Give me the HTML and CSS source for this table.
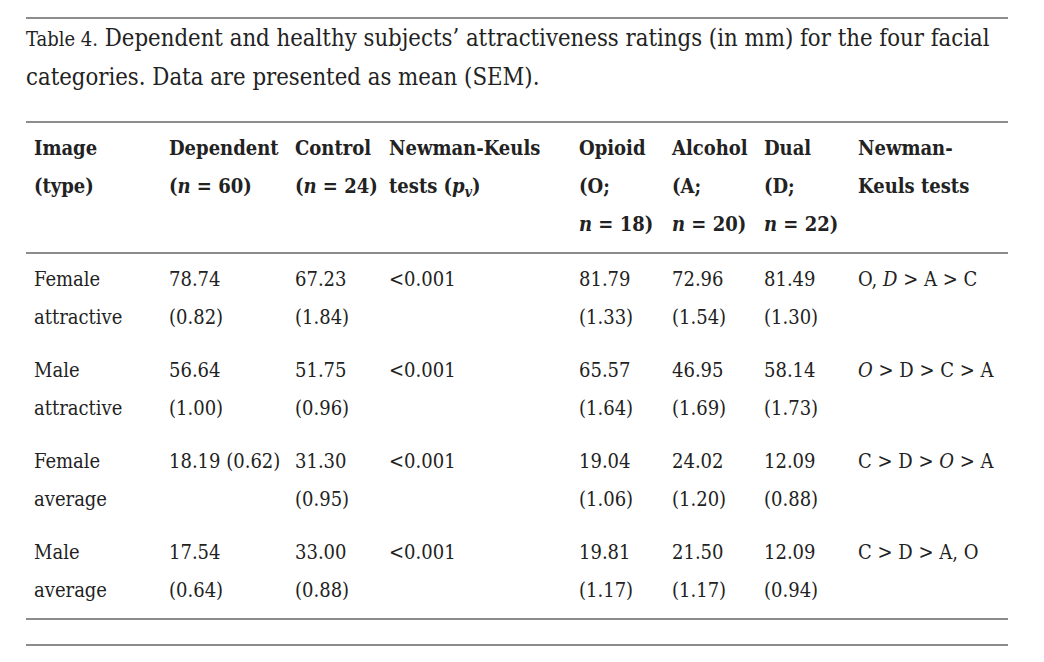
FILE: index.html
```html
<!DOCTYPE html>
<html>
<head>
<meta charset="utf-8">
<link rel="stylesheet" href="styles.css">
</head>
<body>
<div class="wrap">
  <div class="rule"></div>
  <p class="caption"><span class="label">Table 4.</span> Dependent and healthy subjects’ attractiveness ratings (in mm) for the four facial<br>categories. Data are presented as mean (SEM).</p>
  <div class="rule rule-gap"></div>
  <table class="data">
    <colgroup>
      <col class="c1"><col class="c2"><col class="c3"><col class="c4"><col class="c5"><col class="c6"><col class="c7"><col class="c8">
    </colgroup>
    <thead>
      <tr>
        <th>Image<br>(type)</th>
        <th>Dependent<br>(<i>n</i> = 60)</th>
        <th>Control<br>(<i>n</i> = 24)</th>
        <th>Newman-Keuls<br>tests (<i>p<sub>v</sub></i>)</th>
        <th>Opioid<br>(O;<br><i>n</i> = 18)</th>
        <th>Alcohol<br>(A;<br><i>n</i> = 20)</th>
        <th>Dual<br>(D;<br><i>n</i> = 22)</th>
        <th>Newman-<br>Keuls tests</th>
      </tr>
    </thead>
    <tbody>
      <tr>
        <td>Female<br>attractive</td><td>78.74<br>(0.82)</td><td>67.23<br>(1.84)</td><td>&lt;0.001</td>
        <td>81.79<br>(1.33)</td><td>72.96<br>(1.54)</td><td>81.49<br>(1.30)</td><td>O, <i>D</i> &gt; A &gt; C</td>
      </tr>
      <tr>
        <td>Male<br>attractive</td><td>56.64<br>(1.00)</td><td>51.75<br>(0.96)</td><td>&lt;0.001</td>
        <td>65.57<br>(1.64)</td><td>46.95<br>(1.69)</td><td>58.14<br>(1.73)</td><td><i>O</i> &gt; D &gt; C &gt; A</td>
      </tr>
      <tr>
        <td>Female<br>average</td><td>18.19 (0.62)</td><td>31.30<br>(0.95)</td><td>&lt;0.001</td>
        <td>19.04<br>(1.06)</td><td>24.02<br>(1.20)</td><td>12.09<br>(0.88)</td><td>C &gt; D &gt; <i>O</i> &gt; A</td>
      </tr>
      <tr>
        <td>Male<br>average</td><td>17.54<br>(0.64)</td><td>33.00<br>(0.88)</td><td>&lt;0.001</td>
        <td>19.81<br>(1.17)</td><td>21.50<br>(1.17)</td><td>12.09<br>(0.94)</td><td>C &gt; D &gt; A, O</td>
      </tr>
    </tbody>
  </table>
  <div class="rule rule-end"></div>
</div>
</body>
</html>
```

FILE: styles.css
```css
html, body {
  margin: 0;
  padding: 0;
  background: #ffffff;
}

body {
  font-family: "DejaVu Serif", "Liberation Serif", serif;
  font-stretch: condensed;
  color: #222222;
}

.wrap {
  width: 982px;
  margin-left: 26px;
  padding-top: 17px;
}

.rule {
  height: 2px;
  background: #8c8c8c;
}

.rule-gap {
  margin-top: 25px;
}

.rule-end {
  margin-top: 24px;
}

.caption {
  margin: 0;
  font-size: 23.7px;
  line-height: 38px;
  white-space: nowrap;
}

.caption .label {
  font-size: 20px;
}

.data {
  width: 982px;
  border-collapse: collapse;
  table-layout: fixed;
  font-size: 20px;
  line-height: 38px;
}

.c1 { width: 143px; }
.c2 { width: 126px; }
.c3 { width: 94px; }
.c4 { width: 190px; }
.c5 { width: 93px; }
.c6 { width: 92px; }
.c7 { width: 94px; }
.c8 { width: 150px; }

.data th,
.data td {
  text-align: left;
  vertical-align: top;
  padding: 6px 0 9px 0;
  white-space: nowrap;
}

.data th:first-child,
.data td:first-child {
  padding-left: 8px;
}

.data thead th {
  font-weight: bold;
  border-bottom: 2px solid #8c8c8c;
}

.data tbody tr:last-child td {
  border-bottom: 2px solid #8c8c8c;
}

.data sub {
  font-size: 0.7em;
  line-height: 0;
  vertical-align: -0.25em;
}
```
